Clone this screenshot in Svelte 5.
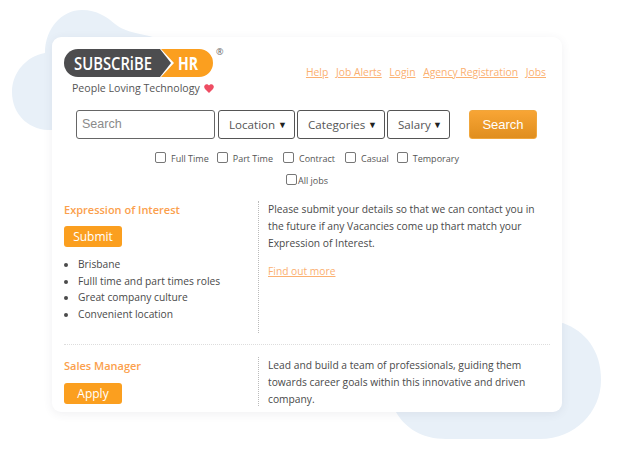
<script>
  const navLinks = ['Help', 'Job Alerts', 'Login', 'Agency Registration', 'Jobs'];
  const selects = [
    { label: 'Location', width: 77 },
    { label: 'Categories', width: 88 },
    { label: 'Salary', width: 63 }
  ];
  const jobTypes = ['Full Time', 'Part Time', 'Contract', 'Casual', 'Temporary'];
  const perks = ['Brisbane', 'Fulll time and part times roles', 'Great company culture', 'Convenient location'];
</script>

<div class="page">
  <svg class="blobs" width="619" height="454" viewBox="0 0 619 454" aria-hidden="true">
    <path d="M12 92C12 72 27 56 45 53C45 28 62 10 82 10C97 10 107 17 115 24C126 33 140 33 165 40L165 130L48 130C27 129 12 113 12 92Z" fill="#e8f0f8"/>
    <path d="M396 412C405 428 422 439 446 439L540 439C575 439 601 412 601 380C601 350 585 331 563 323L480 340Z" fill="#e8f0f8"/>
  </svg>

  <main class="card">
    <header class="top">
      <div class="brand">
        <svg class="logo" width="160" height="34" viewBox="0 0 160 34">
          <path d="M14 3H96L107 17L96 31H14A14 14 0 0 1 14 3Z" fill="#4d4d4f"/>
          <path d="M97 3H135A14 14 0 0 1 149 17A14 14 0 0 1 135 31H97L110 17Z" fill="#fb9f1f"/>
          <text x="10" y="23.5" class="logo-text" textLength="78" lengthAdjust="spacingAndGlyphs">SUBSCRiBE</text>
          <text x="114" y="23.5" class="logo-text hr" textLength="20" lengthAdjust="spacingAndGlyphs">HR</text>
          <text x="152" y="9" class="reg">®</text>
        </svg>
        <div class="tagline">
          People Loving Technology
          <svg class="heart" width="10" height="9" viewBox="0 0 10 9" aria-hidden="true">
            <path d="M5 9L1 5C-.6 3.2.2.4 2.6.2C3.6.1 4.5.7 5 1.5C5.5.7 6.4.1 7.4.2C9.8.4 10.6 3.2 9 5Z" fill="#ee4d63"/>
          </svg>
        </div>
      </div>
      <nav class="links">
        {#each navLinks as link}
          <a href="#top">{link}</a>
        {/each}
      </nav>
    </header>

    <form class="search">
      <input type="text" placeholder="Search" />
      {#each selects as s}
        <div class="select" style="width: {s.width}px">{s.label}<span class="caret">▼</span></div>
      {/each}
      <button type="button" class="search-btn">Search</button>
    </form>

    <div class="types">
      {#each jobTypes as t}
        <label><span class="check"></span>{t}</label>
      {/each}
    </div>
    <div class="all"><label><span class="check"></span>All jobs</label></div>

    <section class="job first">
      <div class="left">
        <h3>Expression of Interest</h3>
        <button type="button" class="btn">Submit</button>
        <ul>
          {#each perks as p}
            <li>{p}</li>
          {/each}
        </ul>
      </div>
      <div class="right">
        <p>Please submit your details so that we can contact you in the future if any Vacancies come up thart match your Expression of Interest.</p>
        <a href="#top">Find out more</a>
      </div>
    </section>

    <section class="job second">
      <div class="left">
        <h3>Sales Manager</h3>
        <button type="button" class="btn apply">Apply</button>
      </div>
      <div class="right">
        <p>Lead and build a team of professionals, guiding them towards career goals within this innovative and driven company.</p>
      </div>
    </section>
  </main>
</div>

<style>
  :global(body) {
    margin: 0;
    background: #fff;
  }

  .page {
    position: relative;
    width: 619px;
    height: 454px;
    overflow: hidden;
    box-sizing: border-box;
    padding: 37px 57px 0 52px;
    font-family: "Open Sans", sans-serif;
    color: #4a4a4a;
  }

  .blobs {
    position: absolute;
    inset: 0;
  }

  .card {
    position: relative;
    height: 375px;
    box-sizing: border-box;
    background: #fff;
    border-radius: 9px;
    box-shadow: 0 2px 10px rgba(60, 70, 90, 0.08);
    padding: 12px 12px 0;
    overflow: hidden;
  }

  .top {
    display: flex;
    justify-content: space-between;
    height: 60px;
  }

  .logo {
    display: block;
    margin-top: -3px;
  }

  .logo-text {
    font-family: "Open Sans", sans-serif;
    font-size: 17.5px;
    font-weight: 600;
    fill: #fff;
  }

  .hr {
    font-weight: 700;
  }

  .reg {
    font-size: 9px;
    fill: #666;
  }

  .tagline {
    margin: 1px 0 0 8px;
    font-size: 10.6px;
    font-weight: 500;
    line-height: 15px;
    color: #555;
  }

  .heart {
    margin-left: 1px;
    vertical-align: -1px;
  }

  .links {
    display: flex;
    gap: 7.6px;
    padding: 16px 4px 0 0;
    font-size: 10.35px;
    line-height: 15px;
  }

  .links a,
  .right a {
    color: #fbb071;
  }

  .search {
    display: flex;
    align-items: center;
    margin-left: 12px;
    height: 30px;
  }

  input {
    width: 139px;
    height: 29px;
    box-sizing: border-box;
    border: 1px solid #666;
    border-radius: 3px;
    padding: 0 5px;
    font: 12.5px "Liberation Sans", sans-serif;
    margin-right: 3px;
  }

  input::placeholder {
    color: #8a8a8a;
  }

  .select {
    display: flex;
    align-items: center;
    justify-content: space-between;
    height: 29px;
    box-sizing: border-box;
    border: 1px solid #555;
    border-radius: 3px;
    padding: 0 7px 0 10px;
    margin-right: 2px;
    font-size: 11.6px;
    color: #555;
  }

  .caret {
    font-size: 9px;
    color: #222;
  }

  .search-btn {
    width: 68px;
    height: 29px;
    margin-left: 17px;
    border: 1px solid #f0a63c;
    border-radius: 3px;
    background: linear-gradient(#f8a535, #e08e1e);
    color: #fff;
    font: 13px "Liberation Sans", sans-serif;
  }

  .types,
  .all {
    display: flex;
    justify-content: center;
    font-size: 9px;
    color: #555;
  }

  .types {
    gap: 10px;
    margin-top: 11px;
    height: 16px;
    align-items: center;
  }

  .types label:first-child {
    margin-right: -2px;
  }

  .types label:last-child {
    margin-left: -2px;
  }

  .all {
    margin-top: 6px;
    height: 16px;
    align-items: center;
  }

  .types label,
  .all label {
    display: flex;
    align-items: center;
  }

  .check {
    width: 9px;
    height: 9px;
    border: 1px solid #777;
    border-radius: 2px;
    margin-right: 5px;
    margin-top: -2px;
    background: #fff;
  }

  .all .check {
    margin-right: 1px;
  }

  .job {
    display: flex;
    font-size: 10.25px;
    line-height: 17px;
  }

  .first {
    margin-top: 13px;
    height: 132px;
    border-bottom: 1px dotted #ddd;
    padding-bottom: 11px;
  }

  .second {
    margin-top: 12px;
    height: 49px;
  }

  .left {
    width: 194px;
    flex: none;
    border-right: 1px dotted #bbb;
  }

  .right {
    padding-left: 9px;
  }

  .right p {
    margin: 0;
  }

  .right a {
    display: block;
    margin-top: 11px;
  }

  h3 {
    margin: 0;
    font-size: 11px;
    font-weight: 600;
    line-height: 17px;
    color: #fba04c;
  }

  .btn {
    display: block;
    width: 58px;
    height: 21px;
    margin-top: 8px;
    border: 0;
    border-radius: 3px;
    padding: 0;
    background: #fb9f1f;
    color: #fff;
    font: 12px "Open Sans", sans-serif;
  }

  .apply {
    margin-top: 9px;
  }

  ul {
    margin: 9px 0 0;
    padding-left: 14px;
    line-height: 16.7px;
  }
</style>
